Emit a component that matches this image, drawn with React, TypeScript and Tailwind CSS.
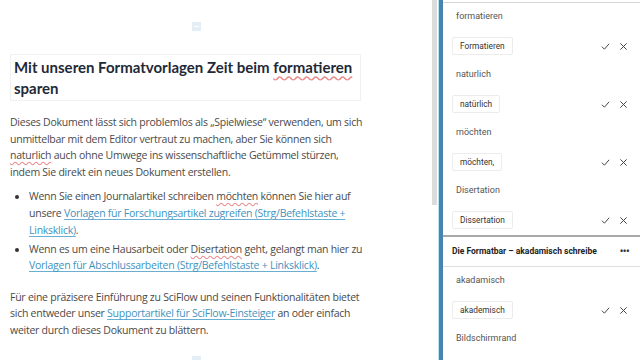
import React from 'react';

const suggestions = [
  { word: 'formatieren', fix: 'Formatieren' },
  { word: 'naturlich', fix: 'natürlich' },
  { word: 'möchten', fix: 'möchten,' },
  { word: 'Disertation', fix: 'Dissertation' },
];

function Check() {
  return (
    <svg width="9" height="9" viewBox="0 0 10 10" fill="none" stroke="#444" strokeWidth="1.1">
      <path d="M1 5.2 L3.8 8 L9 2" />
    </svg>
  );
}

function Cross() {
  return (
    <svg width="9" height="9" viewBox="0 0 10 10" fill="none" stroke="#444" strokeWidth="1.1">
      <path d="M1.5 1.5 L8.5 8.5 M8.5 1.5 L1.5 8.5" />
    </svg>
  );
}

function Suggestion({ word, fix }: { word: string; fix: string }) {
  return (
    <div className="h-[58px] shrink-0">
      <div className="h-[28px] flex items-center pl-[13px] text-[9px] text-[#555]">{word}</div>
      <div className="h-[30px] flex items-center pl-[9px] pr-[12px]">
        <div className="h-[18px] px-[7px] flex items-center border border-[#ececec] rounded-[2px] text-[8.3px] text-[#333]">
          {fix}
        </div>
        <div className="ml-auto flex items-center gap-[9px]">
          <Check />
          <Cross />
        </div>
      </div>
    </div>
  );
}

function PlusMark() {
  return (
    <div className="w-[9px] h-[9px] bg-[#e3eef7] flex items-center justify-center">
      <div className="w-[5px] h-[1px] bg-white" />
    </div>
  );
}

const spell = 'underline decoration-wavy decoration-[#e88a8a] underline-offset-[2px]';
const link = 'text-[#3f93bf] underline decoration-[#6aaed0] underline-offset-2';

export default function App() {
  return (
    <div className="w-[640px] h-[360px] flex overflow-hidden bg-white" style={{ fontFamily: '"Open Sans", sans-serif' }}>
      <div className="w-[432px] shrink-0">
        <div className="h-[54px] pt-[22px] flex justify-center pr-[40px]">
          <PlusMark />
        </div>
        <div className="ml-[10px] w-[351px] border border-[#f1f1f1] pl-[3px] pt-[2px] pb-[1px]">
          <h1 className="text-[15px] leading-[21px] font-bold text-[#1f2a37]" style={{ fontFamily: 'Lato, sans-serif' }}>
            Mit unseren Formatvorlagen Zeit beim <span className={spell}>formatieren</span> sparen
          </h1>
        </div>
        <div className="pl-[10px] pr-[66px] text-[10.5px] tracking-[-0.25px] leading-[16.6px] text-[#4a4a4a]">
          <p className="mt-[13px]">
            Dieses Dokument lässt sich problemlos als „Spielwiese“ verwenden, um sich unmittelbar mit dem Editor vertraut zu machen, aber Sie können sich <span className={spell}>naturlich</span> auch ohne Umwege ins wissenschaftliche Getümmel stürzen, indem Sie direkt ein neues Dokument erstellen.
          </p>
          <ul className="mt-[8px] pl-[19px] list-disc marker:text-[#333]">
            <li>
              Wenn Sie einen Journalartikel schreiben <span className={spell}>möchten</span> können Sie hier auf unsere <span className={link}>Vorlagen für Forschungsartikel zugreifen (Strg/Befehlstaste + Linksklick)</span>.
            </li>
            <li className="mt-[2.5px]">
              Wenn es um eine Hausarbeit oder <span className={spell}>Disertation</span> geht, gelangt man hier zu <span className={link}>Vorlagen für Abschlussarbeiten (Strg/Befehlstaste + Linksklick)</span>.
            </li>
          </ul>
          <p className="mt-[15px]">
            Für eine präzisere Einführung zu SciFlow und seinen Funktionalitäten bietet sich entweder unser <span className={link}>Supportartikel für SciFlow-Einsteiger</span> an oder einfach weiter durch dieses Dokument zu blättern.
          </p>
        </div>
        <div className="mt-[17px] flex justify-center pr-[40px]">
          <PlusMark />
        </div>
      </div>
      <div className="w-[6px] shrink-0">
        <div className="w-[5px] h-[205px] bg-[#dcdcdc]" />
      </div>
      <div className="w-[5px] shrink-0 flex">
        <div className="w-[1px] bg-[#b9e4f3]" />
        <div className="flex-1 bg-[#4a83ae]" />
      </div>
      <div className="flex-1 flex flex-col" style={{ fontFamily: 'Roboto, sans-serif' }}>
        <div className="mt-[2px] border-t border-[#d6d6d6]" />
        {suggestions.map((s) => (
          <Suggestion key={s.word} word={s.word} fix={s.fix} />
        ))}
        <div className="h-[2px] shrink-0 bg-[#a9a9a9]" />
        <div className="h-[30px] shrink-0 flex items-center pl-[9px] pr-[11px] border-b border-[#dedede]">
          <span className="text-[8.5px] font-bold text-[#222]">Die Formatbar – akadamisch schreibe</span>
          <span className="ml-auto text-[10px] font-bold text-[#333] leading-none tracking-[-0.5px]">•••</span>
        </div>
        <Suggestion word="akadamisch" fix="akademisch" />
        <div className="h-[28px] shrink-0 flex items-center pl-[13px] text-[9px] text-[#555]">Bildschirmrand</div>
      </div>
    </div>
  );
}
